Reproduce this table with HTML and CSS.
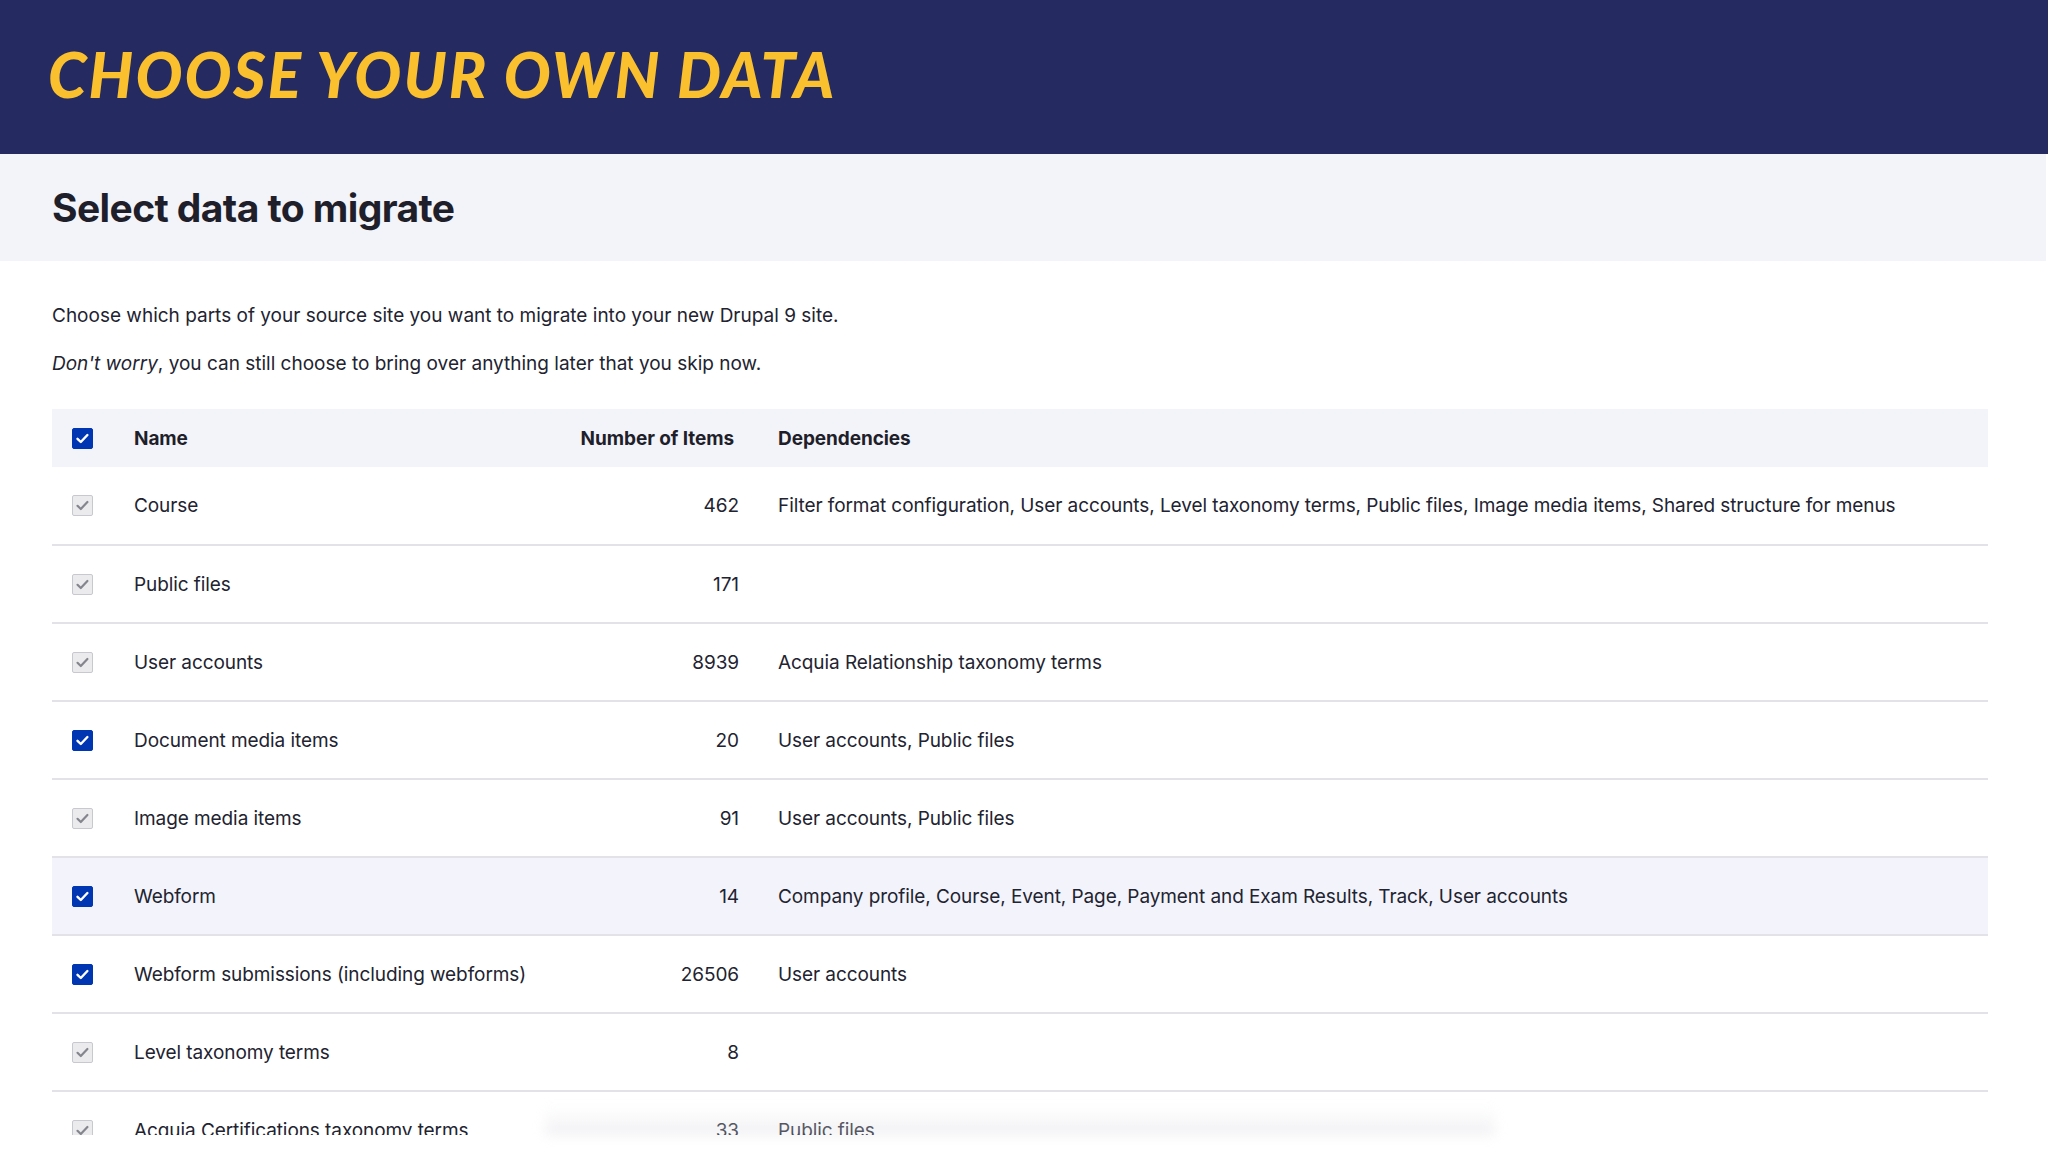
FILE: index.html
```html
<!DOCTYPE html>
<html lang="en">
<head>
<meta charset="utf-8">
<title>Choose your own data</title>
<link rel="stylesheet" href="styles.css">
</head>
<body>
<div class="viewport">
  <header class="banner">
    <div class="banner-title">CHOOSE YOUR OWN DATA</div>
  </header>
  <div class="page-head">
    <h1 class="page-title">Select data to migrate</h1>
  </div>
  <main class="content">
    <p class="intro">Choose which parts of your source site you want to migrate into your new Drupal 9 site.</p>
    <p class="intro"><em>Don't worry</em>, you can still choose to bring over anything later that you skip now.</p>
    <table class="data-table">
      <colgroup>
        <col class="w-check">
        <col class="w-name">
        <col class="w-num">
        <col class="w-dep">
      </colgroup>
      <thead>
        <tr>
          <th class="col-check"><span class="cb cb-on"><svg viewBox="0 0 21 21"><path d="M5.5 10.8l3.3 3.2 6.6-7" /></svg></span></th>
          <th class="col-name">Name</th>
          <th class="col-num">Number of Items</th>
          <th class="col-dep">Dependencies</th>
        </tr>
      </thead>
      <tbody>
        <tr>
          <td class="col-check"><span class="cb cb-dis"><svg viewBox="0 0 21 21"><path d="M5.5 10.8l3.3 3.2 6.6-7" /></svg></span></td>
          <td class="col-name">Course</td>
          <td class="col-num">462</td>
          <td class="col-dep">Filter format configuration, User accounts, Level taxonomy terms, Public files, Image media items, Shared structure for menus</td>
        </tr>
        <tr>
          <td class="col-check"><span class="cb cb-dis"><svg viewBox="0 0 21 21"><path d="M5.5 10.8l3.3 3.2 6.6-7" /></svg></span></td>
          <td class="col-name">Public files</td>
          <td class="col-num">171</td>
          <td class="col-dep"></td>
        </tr>
        <tr>
          <td class="col-check"><span class="cb cb-dis"><svg viewBox="0 0 21 21"><path d="M5.5 10.8l3.3 3.2 6.6-7" /></svg></span></td>
          <td class="col-name">User accounts</td>
          <td class="col-num">8939</td>
          <td class="col-dep">Acquia Relationship taxonomy terms</td>
        </tr>
        <tr>
          <td class="col-check"><span class="cb cb-on"><svg viewBox="0 0 21 21"><path d="M5.5 10.8l3.3 3.2 6.6-7" /></svg></span></td>
          <td class="col-name">Document media items</td>
          <td class="col-num">20</td>
          <td class="col-dep">User accounts, Public files</td>
        </tr>
        <tr>
          <td class="col-check"><span class="cb cb-dis"><svg viewBox="0 0 21 21"><path d="M5.5 10.8l3.3 3.2 6.6-7" /></svg></span></td>
          <td class="col-name">Image media items</td>
          <td class="col-num">91</td>
          <td class="col-dep">User accounts, Public files</td>
        </tr>
        <tr class="is-selected">
          <td class="col-check"><span class="cb cb-on"><svg viewBox="0 0 21 21"><path d="M5.5 10.8l3.3 3.2 6.6-7" /></svg></span></td>
          <td class="col-name">Webform</td>
          <td class="col-num">14</td>
          <td class="col-dep">Company profile, Course, Event, Page, Payment and Exam Results, Track, User accounts</td>
        </tr>
        <tr>
          <td class="col-check"><span class="cb cb-on"><svg viewBox="0 0 21 21"><path d="M5.5 10.8l3.3 3.2 6.6-7" /></svg></span></td>
          <td class="col-name">Webform submissions (including webforms)</td>
          <td class="col-num">26506</td>
          <td class="col-dep">User accounts</td>
        </tr>
        <tr>
          <td class="col-check"><span class="cb cb-dis"><svg viewBox="0 0 21 21"><path d="M5.5 10.8l3.3 3.2 6.6-7" /></svg></span></td>
          <td class="col-name">Level taxonomy terms</td>
          <td class="col-num">8</td>
          <td class="col-dep"></td>
        </tr>
        <tr>
          <td class="col-check"><span class="cb cb-dis"><svg viewBox="0 0 21 21"><path d="M5.5 10.8l3.3 3.2 6.6-7" /></svg></span></td>
          <td class="col-name">Acquia Certifications taxonomy terms</td>
          <td class="col-num">33</td>
          <td class="col-dep">Public files</td>
        </tr>
      </tbody>
    </table>
  </main>
</div>
<div class="bottom-strip">
  <div class="bottom-shadow"></div>
</div>
</body>
</html>
```

FILE: styles.css
```css
* { box-sizing: border-box; }

html, body {
  margin: 0;
  padding: 0;
  background: #ffffff;
}

body {
  font-family: Inter, "Liberation Sans", sans-serif;
  color: #222330;
  width: 2048px;
  height: 1152px;
  overflow: hidden;
}

.viewport {
  height: 1135px;
  overflow: hidden;
}

.banner {
  height: 154px;
  background: #252b61;
  display: flex;
  align-items: center;
  padding-left: 48px;
}

.banner-title {
  font-family: Lato, "Noto Sans", sans-serif;
  font-weight: 900;
  font-style: italic;
  font-size: 62px;
  letter-spacing: 2.2px;
  color: #fbc02d;
  line-height: 1;
  padding-bottom: 6px;
}

.page-head {
  height: 107px;
  background: #f3f4f9;
  display: flex;
  align-items: center;
  padding-left: 52px;
  margin-right: 2px;
}

.page-title {
  margin: 0;
  font-size: 39px;
  font-weight: 700;
  color: #1f1f2b;
  letter-spacing: -0.6px;
  padding-top: 0;
}

.content {
  padding: 43px 60px 0 52px;
}

.intro {
  margin: 0 0 24px 0;
  font-size: 19px;
  line-height: 24px;
  color: #222330;
}

.data-table {
  width: 100%;
  table-layout: fixed;
  border-collapse: collapse;
  margin-top: 33px;
  font-size: 19px;
  letter-spacing: -0.08px;
}

.w-check { width: 82px; }
.w-name { width: 420px; }
.w-num { width: 185px; }

.data-table thead tr {
  background: #f3f4f9;
  height: 58px;
}

.data-table th {
  font-weight: 700;
  text-align: left;
  color: #1f1f2b;
}

.data-table tbody tr {
  height: 78px;
  border-bottom: 2px solid #e2e2e8;
}

.data-table tbody tr.is-selected {
  background: #f3f4fb;
}

.data-table td {
  color: #222330;
  vertical-align: middle;
  white-space: nowrap;
}

.col-check {
  padding-left: 20px;
}

.col-name {
  padding-left: 0;
}

.data-table .col-num {
  text-align: right;
  padding-right: 0;
}

.data-table th.col-num {
  padding-right: 5px;
  white-space: nowrap;
}

.col-dep {
  padding-left: 39px;
}

.cb {
  display: block;
  width: 21px;
  height: 21px;
  border-radius: 2px;
}

.cb svg {
  display: block;
  width: 21px;
  height: 21px;
  fill: none;
  stroke-width: 2.4;
  stroke-linecap: round;
  stroke-linejoin: round;
}

.cb-on {
  background: #0036b1;
  border: 1px solid #0036b1;
}

.cb-on svg {
  margin: -1px;
  stroke: #ffffff;
}

.cb-dis {
  background: #ebebee;
  border: 1px solid #c8c9cf;
}

.cb-dis svg {
  margin: -1px;
  stroke: #85868d;
  stroke-width: 2.2;
}

.bottom-strip {
  height: 17px;
  background: #ffffff;
  position: relative;
}

.bottom-shadow {
  position: absolute;
  left: 545px;
  width: 950px;
  bottom: 17px;
  height: 30px;
  background: linear-gradient(to bottom, rgba(225,226,232,0) 0%, rgba(225,226,232,0.25) 60%, rgba(220,221,228,0.5) 100%);
  filter: blur(6px);
}
```
